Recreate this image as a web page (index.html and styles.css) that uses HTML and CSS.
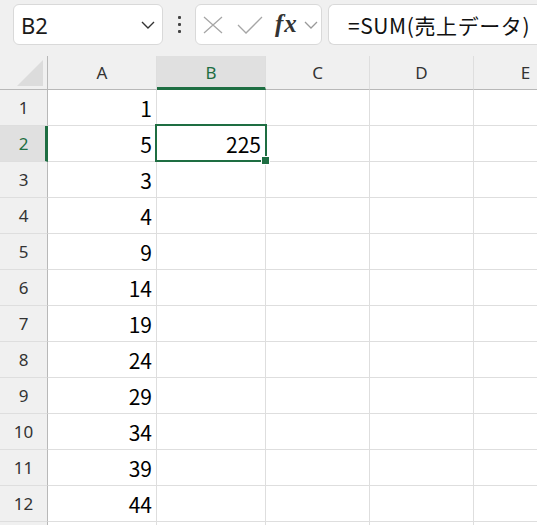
FILE: index.html
```html
<!DOCTYPE html>
<html lang="ja">
<head>
<meta charset="utf-8">
<link rel="stylesheet" href="styles.css">
</head>
<body>
<div class="app">
  <div class="toolbar">
    <div class="namebox">
      <span class="name">B2</span>
      <svg class="chev" width="14" height="8" viewBox="0 0 14 8"><path d="M1 1 L7 7 L13 1" fill="none" stroke="#333" stroke-width="1.4"/></svg>
    </div>
    <div class="kebab"><i></i><i></i><i></i></div>
    <div class="fxbox">
      <svg class="ic" width="20" height="18" viewBox="0 0 20 18"><path d="M1 1 L19 17 M19 1 L1 17" fill="none" stroke="#a6a6a6" stroke-width="1.3"/></svg>
      <svg class="ic chk" width="26" height="18" viewBox="0 0 26 18"><path d="M1 9 L9 17 L25 1" fill="none" stroke="#a6a6a6" stroke-width="1.3"/></svg>
      <span class="fx">fx</span>
      <svg class="chev2" width="14" height="8" viewBox="0 0 14 8"><path d="M1 1 L7 7 L13 1" fill="none" stroke="#999" stroke-width="1.3"/></svg>
    </div>
    <div class="formula">=SUM(売上データ)</div>
  </div>
  <div class="sheet">
    <div class="grid">
      <div class="corner"><span class="tri"></span></div>
      <div class="ch">A</div>
      <div class="ch sel">B</div>
      <div class="ch">C</div>
      <div class="ch">D</div>
      <div class="ch">E</div>

      <div class="rh">1</div><div class="c">1</div><div class="c"></div><div class="c"></div><div class="c"></div><div class="c"></div>
      <div class="rh sel">2</div><div class="c">5</div><div class="c">225</div><div class="c"></div><div class="c"></div><div class="c"></div>
      <div class="rh">3</div><div class="c">3</div><div class="c"></div><div class="c"></div><div class="c"></div><div class="c"></div>
      <div class="rh">4</div><div class="c">4</div><div class="c"></div><div class="c"></div><div class="c"></div><div class="c"></div>
      <div class="rh">5</div><div class="c">9</div><div class="c"></div><div class="c"></div><div class="c"></div><div class="c"></div>
      <div class="rh">6</div><div class="c">14</div><div class="c"></div><div class="c"></div><div class="c"></div><div class="c"></div>
      <div class="rh">7</div><div class="c">19</div><div class="c"></div><div class="c"></div><div class="c"></div><div class="c"></div>
      <div class="rh">8</div><div class="c">24</div><div class="c"></div><div class="c"></div><div class="c"></div><div class="c"></div>
      <div class="rh">9</div><div class="c">29</div><div class="c"></div><div class="c"></div><div class="c"></div><div class="c"></div>
      <div class="rh">10</div><div class="c">34</div><div class="c"></div><div class="c"></div><div class="c"></div><div class="c"></div>
      <div class="rh">11</div><div class="c">39</div><div class="c"></div><div class="c"></div><div class="c"></div><div class="c"></div>
      <div class="rh">12</div><div class="c">44</div><div class="c"></div><div class="c"></div><div class="c"></div><div class="c"></div>
      <div class="rh"></div><div class="c"></div><div class="c"></div><div class="c"></div><div class="c"></div><div class="c"></div>
    </div>
    <div class="active"><span class="handle"></span></div>
  </div>
</div>
</body>
</html>
```
FILE: styles.css
```css
html, body {
  margin: 0;
  padding: 0;
  background: #f0f0f0;
  overflow: hidden;
}
.app {
  width: 537px;
  height: 525px;
  overflow: hidden;
  font-family: "Noto Sans", "Noto Sans CJK JP", sans-serif;
}
.toolbar {
  height: 56px;
  display: flex;
  align-items: flex-start;
  padding: 4px 0 0 13px;
  box-sizing: border-box;
  background: #f0f0f0;
  overflow: hidden;
}
.toolbar > * {
  flex-shrink: 0;
}
.namebox {
  width: 150px;
  height: 41px;
  box-sizing: border-box;
  background: #fff;
  border: 1px solid #d9d9d9;
  border-radius: 6px;
  display: flex;
  align-items: center;
  justify-content: space-between;
  padding: 0 7px 0 7px;
}
.name {
  font-size: 22px;
  color: #1a1a1a;
}
.kebab {
  width: 32px;
  height: 41px;
  display: flex;
  flex-direction: column;
  align-items: center;
  justify-content: center;
  gap: 4px;
}
.kebab i {
  display: block;
  width: 3px;
  height: 3px;
  background: #444;
  border-radius: 1px;
}
.fxbox {
  width: 127px;
  height: 41px;
  box-sizing: border-box;
  background: #fff;
  border: 1px solid #d9d9d9;
  border-radius: 6px;
  display: flex;
  align-items: center;
  padding-left: 7px;
}
.chk { margin-left: 14px; }
.fx {
  font-family: "Liberation Serif", "DejaVu Serif", serif;
  font-style: italic;
  font-weight: bold;
  font-size: 25px;
  color: #333;
  margin-left: 12px;
  letter-spacing: 1px;
  line-height: 1;
  margin-top: -3px;
}
.chev2 { margin-left: 6px; }
.formula {
  margin-left: 6px;
  width: 240px;
  height: 41px;
  box-sizing: border-box;
  background: #fff;
  border: 1px solid #d9d9d9;
  border-right: none;
  border-radius: 6px 0 0 6px;
  display: flex;
  align-items: center;
  padding-left: 19px;
  font-family: "Noto Sans CJK JP", sans-serif;
  font-size: 21px;
  letter-spacing: 0.6px;
  color: #111;
  white-space: nowrap;
}
.sheet {
  position: relative;
}
.grid {
  display: grid;
  grid-template-columns: 48px 109px 109px 104px 104px 104px;
  grid-template-rows: 34px repeat(13, 36px);
  background: #fff;
}
.grid > div {
  box-sizing: border-box;
  border-right: 1px solid #dedede;
  border-bottom: 1px solid #dedede;
}
.corner {
  background: #f0f0f0;
  border-right: 1px solid #b8b8b8 !important;
  border-bottom: 1px solid #b8b8b8 !important;
  position: relative;
}
.tri {
  position: absolute;
  left: 17px;
  top: 4px;
  width: 0;
  height: 0;
  border-left: 26px solid transparent;
  border-bottom: 26px solid #dcdcdc;
}
.ch {
  background: #f0f0f0;
  border-bottom: 1px solid #b8b8b8 !important;
  display: flex;
  align-items: center;
  justify-content: center;
  font-size: 17px;
  color: #333;
  padding-bottom: 1px;
}
.ch.sel {
  background: #e0e0e0;
  color: #1e6e42;
  border-bottom: 3px solid #1e6e42 !important;
  padding-top: 2px;
}
.rh {
  background: #f0f0f0;
  border-right: 1px solid #b8b8b8 !important;
  display: flex;
  align-items: center;
  justify-content: center;
  font-size: 17px;
  color: #333;
}
.rh.sel {
  background: #e0e0e0;
  color: #1e6e42;
  border-right: 3px solid #1e6e42 !important;
  padding-left: 2px;
}
.c {
  display: flex;
  align-items: center;
  justify-content: flex-end;
  padding-right: 4px;
  font-family: "Noto Sans CJK JP", sans-serif;
  font-size: 21px;
  color: #000;
}
.active {
  position: absolute;
  left: 155px;
  top: 68px;
  width: 112px;
  height: 38px;
  box-sizing: border-box;
  border: 2px solid #1e6e42;
  pointer-events: none;
}
.handle {
  position: absolute;
  right: -5px;
  bottom: -5px;
  width: 7px;
  height: 7px;
  background: #1e6e42;
  border: 1px solid #fff;
  box-sizing: content-box;
}
```
